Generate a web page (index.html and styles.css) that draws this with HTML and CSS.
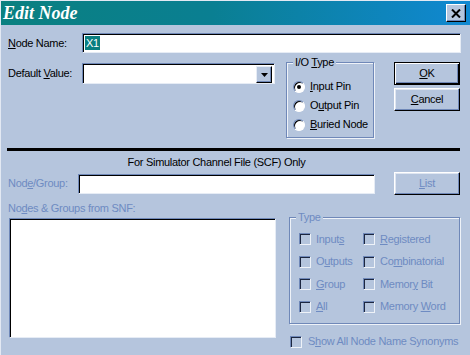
FILE: index.html
```html
<!DOCTYPE html>
<html>
<head>
<meta charset="utf-8">
<link rel="stylesheet" href="styles.css">
</head>
<body>
<div class="window">
  <div class="titlebar">
    <span class="title">Edit Node</span>
    <span class="close"><svg width="10" height="9" viewBox="0 0 10 9"><path d="M1 0.5 L9 8.5 M9 0.5 L1 8.5" stroke="#000" stroke-width="2" fill="none"/></svg></span>
  </div>
  <div class="content">
    <div class="row name-row">
      <label class="lbl w74"><u>N</u>ode Name:</label>
      <div class="input wide"><span class="sel">X1</span></div>
    </div>

    <div class="top">
      <div class="default-col">
        <label class="lbl w74">Default <u>V</u>alue:</label>
        <div class="input combo"><span class="combo-btn"><svg width="7" height="4" viewBox="0 0 7 4"><path d="M0 0 H7 L3.5 4 Z" fill="#000"/></svg></span></div>
      </div>
      <div class="group io-group">
        <span class="legend">I/O <u>T</u>ype</span>
        <div class="radios">
          <div class="radio-row"><span class="radio checked"></span><span><u>I</u>nput Pin</span></div>
          <div class="radio-row"><span class="radio"></span><span>O<u>u</u>tput Pin</span></div>
          <div class="radio-row"><span class="radio"></span><span><u>B</u>uried Node</span></div>
        </div>
      </div>
      <div class="buttons">
        <div class="btn default"><u>O</u>K</div>
        <div class="btn"><u>C</u>ancel</div>
      </div>
    </div>

    <div class="separator"></div>
    <div class="caption">For Simulator Channel File (SCF) Only</div>

    <div class="row group-row">
      <label class="lbl w70 dis">Nod<u>e</u>/Group:</label>
      <div class="input ng"></div>
      <div class="btn list dis"><u>L</u>ist</div>
    </div>

    <div class="lbl dis snf-lbl">No<u>d</u>es &amp; Groups from SNF:</div>

    <div class="bottom">
      <div class="listbox"></div>
      <div class="right-col">
        <div class="group type-group">
          <span class="legend dis">Type</span>
          <div class="checks">
            <div class="check-row"><span class="cb"></span><span class="dis">Input<u>s</u></span></div>
            <div class="check-row"><span class="cb"></span><span class="dis"><u>R</u>egistered</span></div>
            <div class="check-row"><span class="cb"></span><span class="dis">O<u>u</u>tputs</span></div>
            <div class="check-row"><span class="cb"></span><span class="dis">Co<u>m</u>binatorial</span></div>
            <div class="check-row"><span class="cb"></span><span class="dis"><u>G</u>roup</span></div>
            <div class="check-row"><span class="cb"></span><span class="dis">Memor<u>y</u> Bit</span></div>
            <div class="check-row"><span class="cb"></span><span class="dis"><u>A</u>ll</span></div>
            <div class="check-row"><span class="cb"></span><span class="dis">Memory <u>W</u>ord</span></div>
          </div>
        </div>
        <div class="check-row show-all"><span class="cb"></span><span class="dis">S<u>h</u>ow All Node Name Synonyms</span></div>
      </div>
    </div>
  </div>
</div>
</body>
</html>
```

FILE: styles.css
```css
* { box-sizing: border-box; }
html, body { margin: 0; padding: 0; }
body { width: 470px; height: 355px; overflow: hidden; background: #b5c5dd; }

.window {
  width: 470px;
  height: 355px;
  background: #b5c5dd;
  border-top: 1px solid #e3e9f3;
  border-left: 1px solid #e3e9f3;
  font: 11px/13px "Liberation Sans", Arial, sans-serif;
  letter-spacing: -0.3px;
  color: #000;
}

.titlebar {
  height: 24px;
  display: flex;
  align-items: center;
  justify-content: space-between;
  padding: 0 4px 0 2px;
  background: linear-gradient(90deg, #0a8080 0%, #0a7f92 45%, #1088d2 100%);
  letter-spacing: 0;
}
.title {
  font: italic bold 18px/20px "Liberation Serif", "Times New Roman", serif;
  color: #fff;
}
.close {
  width: 20px;
  height: 18px;
  display: flex;
  align-items: center;
  justify-content: center;
  background: #b5c5dd;
  border: 1px solid;
  border-color: #fff #000 #000 #fff;
  box-shadow: inset -1px -1px 0 #6f88b8;
}

.content { padding: 8px 9px 0 7px; }

.row { display: flex; align-items: center; }
.lbl { flex: none; white-space: nowrap; }
.w74 { width: 74px; }
.w70 { width: 70px; }
.dis { color: #6e8bc2; }

.input {
  background: #fff;
  border: 1px solid;
  border-color: #6f88b8 #e6ecf5 #e6ecf5 #6f88b8;
  box-shadow: inset 1px 1px 0 #000;
  height: 20px;
}
.wide { flex: 1; padding: 2px 0 0 2px; }
.sel { background: #0a7f80; color: #fff; display: inline-block; line-height: 14px; padding: 0 1px; }

.top { display: flex; align-items: flex-start; margin-top: 9px; }
.default-col { display: flex; align-items: center; width: 267px; margin-top: 1px; }
.combo {
  width: 193px;
  height: 21px;
  display: flex;
  justify-content: flex-end;
  padding: 2px;
}
.combo-btn {
  width: 16px;
  height: 17px;
  display: flex;
  align-items: center;
  justify-content: center;
  background: #b5c5dd;
  border: 1px solid;
  border-color: #e6ecf5 #000 #000 #e6ecf5;
  box-shadow: inset -1px -1px 0 #6f88b8;
}

.group {
  border: 1px solid #6f88b8;
  box-shadow: inset 1px 1px 0 #eef2f8, 1px 1px 0 #eef2f8;
}
.legend {
  display: block;
  width: fit-content;
  margin: -7px 0 0 6px;
  padding: 0 2px;
  background: #b5c5dd;
  height: 13px;
  white-space: nowrap;
}
.io-group { width: 88px; height: 76px; margin-left: 11px; }
.radios { padding: 8px 0 0 6px; width: 84px; overflow: hidden; }
.radio-row { display: flex; align-items: center; height: 19px; white-space: nowrap; }
.radio {
  flex: none;
  width: 12px;
  height: 12px;
  margin-right: 5px;
  border-radius: 50%;
  background: #fff;
  border: 1px solid;
  border-color: #6f88b8 #fff #fff #6f88b8;
  box-shadow: inset 1px 1px 0 #000;
  display: flex;
  align-items: center;
  justify-content: center;
}
.radio.checked::after {
  content: "";
  width: 4px;
  height: 4px;
  border-radius: 50%;
  background: #000;
}

.buttons { display: flex; flex-direction: column; gap: 3px; margin-left: 20px; width: 66px; }
.btn {
  height: 23px;
  display: flex;
  align-items: center;
  justify-content: center;
  background: #b5c5dd;
  border: 1px solid;
  border-color: #fff #000 #000 #fff;
  box-shadow: inset -1px -1px 0 #6f88b8, inset 1px 1px 0 #dfe6f1;
}
.btn.default {
  border-color: #000;
  box-shadow: inset 1px 1px 0 #fff, inset -1px -1px 0 #000, inset -2px -2px 0 #6f88b8;
}

.separator { height: 3px; background: #000; margin: 10px 1px 0 -1px; }
.caption { margin-top: 5px; text-align: center; padding-right: 36px; }

.group-row { margin-top: 3px; }
.ng { width: 297px; }
.list { width: 66px; margin-left: 19px; }

.snf-lbl { margin-top: 7px; }

.bottom { display: flex; align-items: flex-start; }
.listbox {
  width: 267px;
  height: 120px;
  margin: 3px 0 0 1px;
  background: #fff;
  border: 1px solid;
  border-color: #6f88b8 #e6ecf5 #e6ecf5 #6f88b8;
  box-shadow: inset 1px 1px 0 #000;
}
.right-col { margin-left: 13px; width: 171px; margin-top: 2px; }
.type-group { height: 107px; }
.checks {
  display: grid;
  grid-template-columns: 64px 1fr;
  grid-auto-rows: 22.5px;
  padding: 4px 0 0 9px;
}
.check-row { display: flex; align-items: center; white-space: nowrap; }
.cb {
  flex: none;
  width: 12px;
  height: 12px;
  margin-right: 5px;
  border: 1px solid;
  border-color: #6f88b8 #eef2f8 #eef2f8 #6f88b8;
  box-shadow: inset 1px 1px 0 #1c2740;
}
.show-all { margin: 11px 0 0 1px; height: 13px; }
.show-all .cb { margin-right: 6px; }
```
